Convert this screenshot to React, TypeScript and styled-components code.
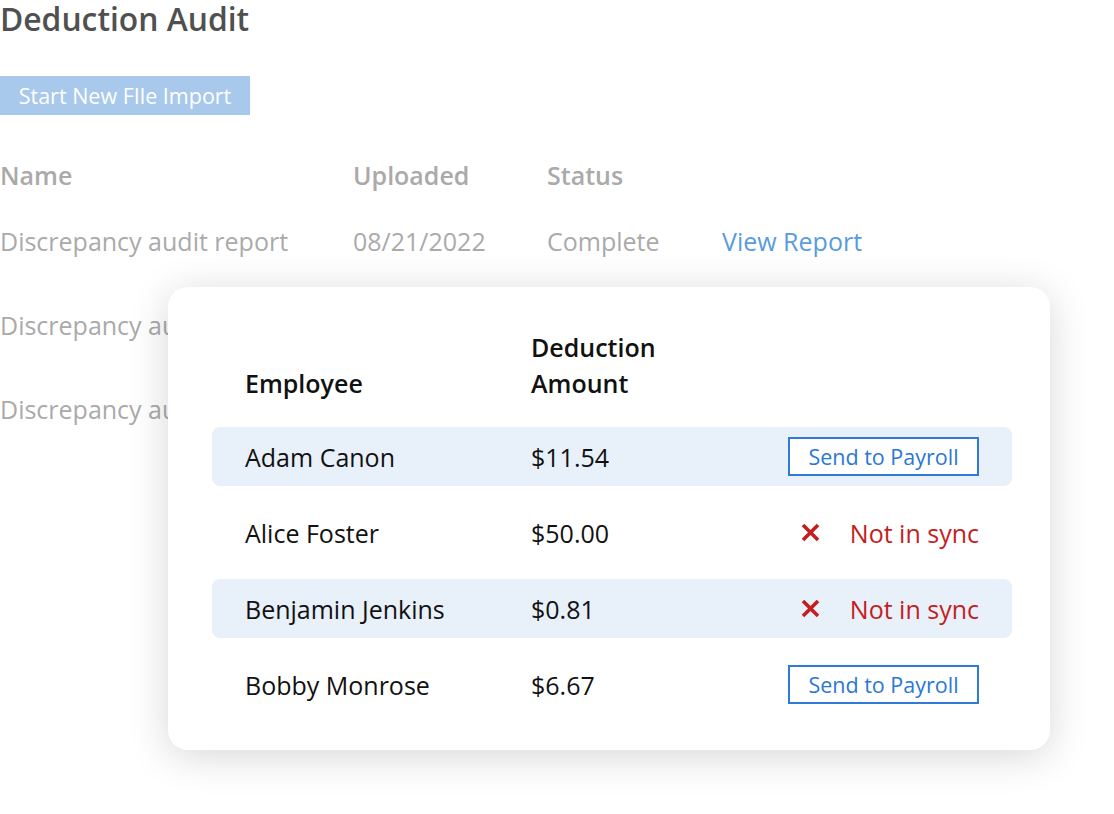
import styled, { createGlobalStyle } from "styled-components";

const GlobalStyle = createGlobalStyle`
  html, body {
    margin: 0;
    padding: 0;
    background: #ffffff;
  }
  body {
    font-family: "Open Sans", Lato, "Liberation Sans", sans-serif;
  }
`;

const Page = styled.div`
  position: relative;
  width: 1114px;
  height: 814px;
  overflow: hidden;
`;

const Title = styled.h1`
  margin: 0;
  font-size: 31.8px;
  line-height: 38px;
  font-weight: 600;
  color: #505050;
`;

const ImportButton = styled.button`
  margin-top: 38px;
  height: 39px;
  width: 250px;
  border: none;
  background: #a8c8ec;
  color: #ffffff;
  font-family: inherit;
  font-size: 21.5px;
  padding: 0;
  cursor: pointer;
`;

const FileGrid = styled.div`
  display: grid;
  grid-template-columns: 353px 194px 175px auto;
  margin-top: 45px;
  row-gap: 54px;
  font-size: 25px;
  line-height: 30px;
  color: #aaaaaa;
`;

const HeadCell = styled.div`
  font-weight: 600;
  margin-bottom: -18px;
`;

const Cell = styled.div``;

const ReportLink = styled.a`
  color: #5a9be0;
  text-decoration: none;
`;

const Card = styled.div`
  position: absolute;
  left: 168px;
  top: 287px;
  width: 882px;
  box-sizing: border-box;
  padding: 42px 38px 36px 44px;
  background: #ffffff;
  border-radius: 20px;
  box-shadow: 0 6px 40px rgba(0, 0, 0, 0.16);
`;

const Grid = styled.div`
  display: grid;
  grid-template-columns: 286px 1fr auto;
  align-items: center;
  padding: 0 33px;
`;

const CardHead = styled(Grid)`
  align-items: end;
  font-size: 25px;
  line-height: 36px;
  font-weight: 600;
  color: #111111;
  margin-bottom: 26px;
`;

const Rows = styled.div`
  display: flex;
  flex-direction: column;
  gap: 17px;
`;

const Row = styled(Grid)<{ $shaded: boolean }>`
  height: 59px;
  border-radius: 8px;
  background: ${(p) => (p.$shaded ? "#e8f0fa" : "transparent")};
  font-size: 25px;
  color: #111111;
`;

const PayrollButton = styled.button`
  height: 39px;
  width: 191px;
  box-sizing: border-box;
  border: 2px solid #2d7bd6;
  background: #ffffff;
  color: #2a78d4;
  font-family: inherit;
  font-size: 21.5px;
  padding: 0;
  cursor: pointer;
`;

const SyncStatus = styled.div`
  justify-self: end;
  display: flex;
  align-items: center;
  gap: 29px;
  color: #c41e1e;
  font-size: 25px;
`;

function CrossIcon() {
  return (
    <svg width="21" height="21" viewBox="0 0 21 21" aria-hidden>
      <path
        d="M3 3L18 18M18 3L3 18"
        stroke="#c41e1e"
        strokeWidth="3.6"
        strokeLinecap="butt"
      />
    </svg>
  );
}

const files = [
  { name: "Discrepancy audit report", date: "08/21/2022", status: "Complete" },
  { name: "Discrepancy audit report", date: "08/21/2022", status: "Complete" },
  { name: "Discrepancy audit report", date: "08/21/2022", status: "Complete" },
];

const employees = [
  { name: "Adam Canon", amount: "$11.54", synced: true },
  { name: "Alice Foster", amount: "$50.00", synced: false },
  { name: "Benjamin Jenkins", amount: "$0.81", synced: false },
  { name: "Bobby Monrose", amount: "$6.67", synced: true },
];

export default function App() {
  return (
    <Page>
      <GlobalStyle />
      <Title>Deduction Audit</Title>
      <ImportButton>Start New FIle Import</ImportButton>

      <FileGrid>
        <HeadCell>Name</HeadCell>
        <HeadCell>Uploaded</HeadCell>
        <HeadCell>Status</HeadCell>
        <HeadCell />
        {files.map((f, i) => (
          <>
            <Cell key={`n${i}`}>{f.name}</Cell>
            <Cell key={`d${i}`}>{f.date}</Cell>
            <Cell key={`s${i}`}>{f.status}</Cell>
            <Cell key={`l${i}`}>
              <ReportLink href="#">View Report</ReportLink>
            </Cell>
          </>
        ))}
      </FileGrid>

      <Card>
        <CardHead>
          <div>Employee</div>
          <div>
            Deduction
            <br />
            Amount
          </div>
          <div />
        </CardHead>
        <Rows>
          {employees.map((e, i) => (
            <Row key={e.name} $shaded={i % 2 === 0}>
              <div>{e.name}</div>
              <div>{e.amount}</div>
              {e.synced ? (
                <PayrollButton>Send to Payroll</PayrollButton>
              ) : (
                <SyncStatus>
                  <CrossIcon />
                  Not in sync
                </SyncStatus>
              )}
            </Row>
          ))}
        </Rows>
      </Card>
    </Page>
  );
}
